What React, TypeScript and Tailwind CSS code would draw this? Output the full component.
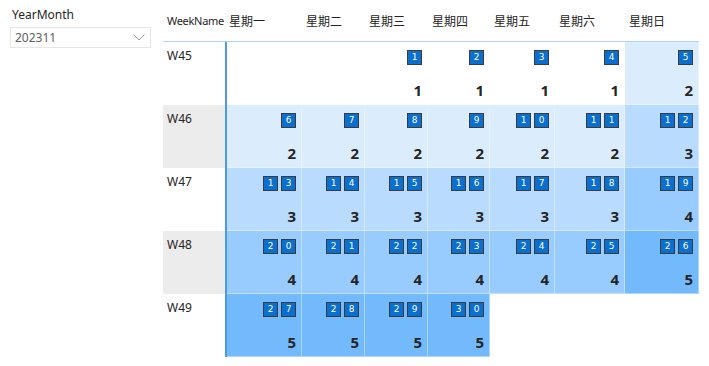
import React from "react";

const colW = [77, 63, 63, 62, 65, 70, 74];
const heads = ["星期一", "星期二", "星期三", "星期四", "星期五", "星期六", "星期日"];

type Cell = { d: number; v: number } | null;

const rows: { name: string; gray: boolean; cells: Cell[] }[] = [
  {
    name: "W45",
    gray: false,
    cells: [null, null, { d: 1, v: 1 }, { d: 2, v: 1 }, { d: 3, v: 1 }, { d: 4, v: 1 }, { d: 5, v: 2 }],
  },
  {
    name: "W46",
    gray: true,
    cells: [6, 7, 8, 9, 10, 11, 12].map((d, i) => ({ d, v: i === 6 ? 3 : 2 })),
  },
  {
    name: "W47",
    gray: false,
    cells: [13, 14, 15, 16, 17, 18, 19].map((d, i) => ({ d, v: i === 6 ? 4 : 3 })),
  },
  {
    name: "W48",
    gray: true,
    cells: [20, 21, 22, 23, 24, 25, 26].map((d, i) => ({ d, v: i === 6 ? 5 : 4 })),
  },
  {
    name: "W49",
    gray: false,
    cells: [{ d: 27, v: 5 }, { d: 28, v: 5 }, { d: 29, v: 5 }, { d: 30, v: 5 }, null, null, null],
  },
];

function bgFor(v: number) {
  switch (v) {
    case 1:
      return "bg-white";
    case 2:
      return "bg-[#dbecfd]";
    case 3:
      return "bg-[#b9dcfe]";
    case 4:
      return "bg-[#98cbfe]";
    default:
      return "bg-[#73bafd]";
  }
}

function Box({ ch }: { ch: string }) {
  return (
    <div className="w-[15px] h-[15px] bg-[#0a6fcf] border-[1.5px] border-[#3b3b3b] flex items-center justify-center text-white text-[9px] leading-none font-['DejaVu_Sans',sans-serif]">
      {ch}
    </div>
  );
}

function DataCell({ c, w }: { c: Cell; w: number }) {
  if (!c) {
    return <div className="h-full bg-white" style={{ width: w }} />;
  }
  const digits = String(c.d).split("");
  return (
    <div
      className={`h-full flex flex-col items-end pr-[5px] pt-[8px] border-r border-b border-white/40 ${bgFor(c.v)}`}
      style={{ width: w }}
    >
      <div className="flex gap-[3px]">
        {digits.map((ch, i) => (
          <Box key={i} ch={ch} />
        ))}
      </div>
      <div className="mt-[18px] text-[15px] font-bold leading-none text-[#252423]">{c.v}</div>
    </div>
  );
}

export default function App() {
  return (
    <div className="w-[709px] h-[366px] bg-white flex font-['Noto_Sans','Open_Sans',sans-serif] text-[#252423]">
      <div className="w-[163px] shrink-0 pl-[10px]">
        <div className="pl-[2px] pt-[7px] text-[12px] leading-[16px] text-[#252423]">YearMonth</div>
        <div className="mt-[4px] w-[141px] h-[21px] border border-[#e6e6e6] flex items-center justify-between pl-[4px] pr-[4px]">
          <span className="text-[12px] text-[#605e5c]">202311</span>
          <svg width="12" height="7" viewBox="0 0 12 7" className="mr-[1px]">
            <path d="M0.5 0.5 L6 6 L11.5 0.5" fill="none" stroke="#a0a0a0" strokeWidth="1" />
          </svg>
        </div>
      </div>
      <div className="flex flex-col">
        <div className="flex h-[42px] border-b-[1.5px] border-[#add3f6] items-center pt-[1px]">
          <div className="w-[62px] pl-[4px] text-[11px] tracking-[-0.3px] whitespace-nowrap">WeekName</div>
          {heads.map((h, i) => (
            <div key={h} className="pl-[4px] text-[12px] font-['Noto_Sans_CJK_SC',sans-serif]" style={{ width: colW[i] }}>
              {h}
            </div>
          ))}
        </div>
        <div className="flex">
          <div className="w-[62px] flex flex-col">
            {rows.map((r) => (
              <div
                key={r.name}
                className={`h-[63px] pl-[4px] pt-[6px] text-[12px] leading-[16px] ${r.gray ? "bg-[#ececec]" : "bg-white"}`}
              >
                {r.name}
              </div>
            ))}
          </div>
          <div className="border-l-2 border-[#4c9be8] flex flex-col">
            {rows.map((r) => (
              <div key={r.name} className="flex h-[63px]">
                {r.cells.map((c, i) => (
                  <DataCell key={i} c={c} w={i === 0 ? colW[0] - 2 : colW[i]} />
                ))}
              </div>
            ))}
          </div>
        </div>
      </div>
    </div>
  );
}
